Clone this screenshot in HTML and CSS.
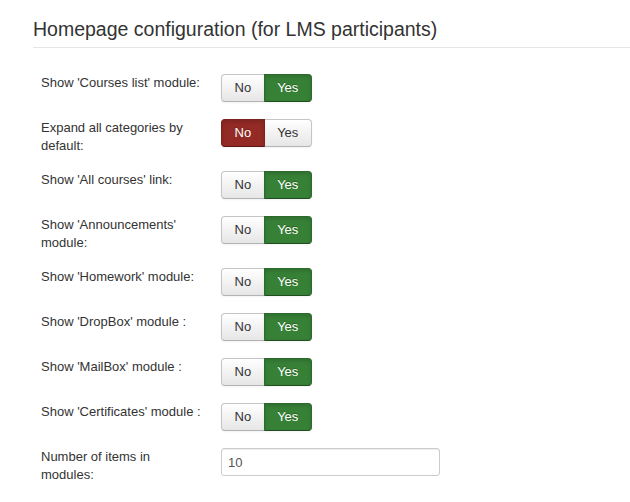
FILE: index.html
```html
<!DOCTYPE html>
<html lang="en">

<head>
    <meta charset="UTF-8">
    <title>Homepage configuration</title>
    <link rel="stylesheet" href="styles.css">
</head>

<body>
    <div class="config-page">
        <h2 class="section-title">Homepage configuration (for LMS participants)</h2>

        <form class="config-form">
            <div class="control-group">
                <label class="control-label">Show 'Courses list' module:</label>
                <div class="btn-group">
                    <button type="button" class="btn">No</button>
                    <button type="button" class="btn active yes">Yes</button>
                </div>
            </div>

            <div class="control-group">
                <label class="control-label">Expand all categories by<br>default:</label>
                <div class="btn-group">
                    <button type="button" class="btn active no">No</button>
                    <button type="button" class="btn">Yes</button>
                </div>
            </div>

            <div class="control-group">
                <label class="control-label">Show 'All courses' link:</label>
                <div class="btn-group">
                    <button type="button" class="btn">No</button>
                    <button type="button" class="btn active yes">Yes</button>
                </div>
            </div>

            <div class="control-group">
                <label class="control-label">Show 'Announcements'<br>module:</label>
                <div class="btn-group">
                    <button type="button" class="btn">No</button>
                    <button type="button" class="btn active yes">Yes</button>
                </div>
            </div>

            <div class="control-group">
                <label class="control-label">Show 'Homework' module:</label>
                <div class="btn-group">
                    <button type="button" class="btn">No</button>
                    <button type="button" class="btn active yes">Yes</button>
                </div>
            </div>

            <div class="control-group">
                <label class="control-label">Show 'DropBox' module :</label>
                <div class="btn-group">
                    <button type="button" class="btn">No</button>
                    <button type="button" class="btn active yes">Yes</button>
                </div>
            </div>

            <div class="control-group">
                <label class="control-label">Show 'MailBox' module :</label>
                <div class="btn-group">
                    <button type="button" class="btn">No</button>
                    <button type="button" class="btn active yes">Yes</button>
                </div>
            </div>

            <div class="control-group">
                <label class="control-label">Show 'Certificates' module :</label>
                <div class="btn-group">
                    <button type="button" class="btn">No</button>
                    <button type="button" class="btn active yes">Yes</button>
                </div>
            </div>

            <div class="control-group">
                <label class="control-label" for="itemsCount">Number of items in<br>modules:</label>
                <input type="text" id="itemsCount" class="text-input" value="10">
            </div>
        </form>
    </div>
</body>

</html>
```

FILE: styles.css
```css
body {
    margin: 0;
    background-color: #fff;
}

.config-page {
    font-family: "Liberation Sans", Arial, sans-serif;
    color: #333;
    padding-left: 33px;

    .section-title {
        margin: 17px 0 0;
        padding-bottom: 6px;
        font-size: 19.5px;
        font-weight: normal;
        line-height: 24px;
        border-bottom: 1px solid #e5e5e5;
    }

    .config-form {
        margin-top: 26px;
        padding-left: 8px;
    }

    .control-group {
        display: flex;
        align-items: flex-start;
        min-height: 29px;
        margin-bottom: 16px;
    }

    .control-label {
        width: 180px;
        flex-shrink: 0;
        font-size: 13px;
        line-height: 18px;
    }

    .btn-group {
        display: flex;
    }

    .btn {
        margin: 0;
        padding: 4px 12.5px;
        font-family: inherit;
        font-size: 13px;
        line-height: 18px;
        color: #333;
        background-color: #f3f3f3;
        background-image: linear-gradient(to bottom, #fff, #e6e6e6);
        border: 1px solid #c5c5c5;
        border-bottom-color: #b3b3b3;
        box-shadow: inset 0 1px 0 rgba(255, 255, 255, .2), 0 1px 2px rgba(0, 0, 0, .05);
        cursor: pointer;
    }

    .btn:first-child {
        border-radius: 4px 0 0 4px;
    }

    .btn:last-child {
        margin-left: -1px;
        border-radius: 0 4px 4px 0;
    }

    .btn.active {
        color: #fff;
        text-shadow: 0 -1px 0 rgba(0, 0, 0, .25);
        box-shadow: inset 0 2px 4px rgba(0, 0, 0, .15), 0 1px 2px rgba(0, 0, 0, .05);
        position: relative;
    }

    .btn.active.yes {
        background: #378137;
        border-color: #2c6a2c #2c6a2c #1f4f1f;
    }

    .btn.active.no {
        background: #942a25;
        border-color: #7a221e #7a221e #5c1916;
    }

    .text-input {
        box-sizing: border-box;
        width: 219px;
        height: 28px;
        padding: 4px 6px;
        font-family: inherit;
        font-size: 13px;
        color: #555;
        border: 1px solid #ccc;
        border-radius: 3px;
        box-shadow: inset 0 1px 1px rgba(0, 0, 0, .075);
    }
}
```
